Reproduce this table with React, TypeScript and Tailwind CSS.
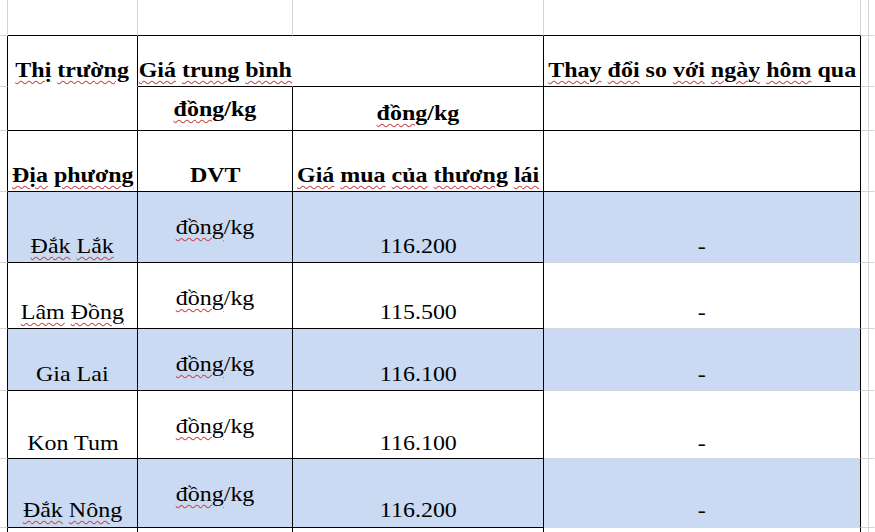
import React from 'react';

// border colours: black table lines, grey sheet gridlines, none
const rK = 'border-r-black';
const rG = 'border-r-[#d4d4d4]';
const rN = 'border-r-transparent';
const bK = 'border-b-black';
const bG = 'border-b-[#d4d4d4]';
const bL = 'border-b-[#d3d8e0]';
const bN = 'border-b-transparent';

const BLUE = 'bg-[#c9daf2]';

const rows = [
  { place: '[Đắk] [Lắk]', price: '116.200', blue: true, pb: 'pb-[5px]' },
  { place: '[Lâm] [Đồng]', price: '115.500', blue: false, pb: 'pb-[5px]' },
  { place: 'Gia Lai', price: '116.100', blue: true, pb: 'pb-[5px]' },
  { place: 'Kon Tum', price: '116.100', blue: false, pb: 'pb-[4px]' },
  { place: '[Đắk] [Nông]', price: '116.200', blue: true, pb: 'pb-[6px]' },
];

// words in [brackets] get the red spell-check squiggle
function Txt({ text, bold }: { text: string; bold?: boolean }) {
  const parts = text.split(/(\[[^\]]+\])/).filter(Boolean);
  return (
    <span
      className={`block origin-center scale-x-[1.09] whitespace-nowrap [font-family:Liberation_Serif,Times_New_Roman,serif] text-[22px] leading-[22px] text-black ${bold ? 'font-bold' : 'font-normal'}`}
    >
      {parts.map((p, i) =>
        p.startsWith('[') ? (
          <span key={i} className="underline decoration-wavy decoration-[#c94a4a] decoration-1 underline-offset-[3px]">
            {p.slice(1, -1)}
          </span>
        ) : (
          <React.Fragment key={i}>{p}</React.Fragment>
        )
      )}
    </span>
  );
}

function Cell({
  r,
  b,
  bg = 'bg-white',
  pos = 'items-end pb-[5px]',
  children,
}: {
  r: string;
  b: string;
  bg?: string;
  pos?: string;
  children?: React.ReactNode;
}) {
  return <div className={`flex justify-center overflow-visible border-r border-b ${r} ${b} ${bg} ${pos}`}>{children}</div>;
}

export default function App() {
  return (
    <div className="grid h-[532px] w-[875px] grid-cols-[8px_130px_155px_251px_317px_8px_1fr] grid-rows-[3px_33px_51px_44px_61px_71px_66px_62px_68px_69px_40px] overflow-hidden bg-white [font-family:Liberation_Serif,serif]">
      {/* sheet rows above the table */}
      <Cell r={rG} b={bG} />
      <Cell r={rG} b={bG} />
      <Cell r={rG} b={bG} />
      <Cell r={rG} b={bG} />
      <Cell r={rG} b={bG} />
      <Cell r={rG} b={bG} />
      <Cell r={rN} b={bG} />

      <Cell r={rG} b={bG} />
      <Cell r={rG} b={bK} />
      <Cell r={rG} b={bK} />
      <Cell r={rG} b={bK} />
      <Cell r={rG} b={bK} />
      <Cell r={rG} b={bG} />
      <Cell r={rN} b={bG} />

      {/* header row 1 */}
      <Cell r={rK} b={bG} />
      <Cell r={rK} b={bN}>
        <Txt bold text="[Thị] [trường]" />
      </Cell>
      <Cell r={rN} b={bK}>
        <Txt bold text="[Giá] [trung] [bình]" />
      </Cell>
      <Cell r={rK} b={bK} />
      <Cell r={rK} b={bK}>
        <Txt bold text="[Thay] [đổi] so [với] [ngày] [hôm] qua" />
      </Cell>
      <Cell r={rG} b={bG} />
      <Cell r={rN} b={bG} />

      {/* header row 2 */}
      <Cell r={rK} b={bG} />
      <Cell r={rK} b={bK} />
      <Cell r={rK} b={bK} pos="items-end pb-[10px]">
        <Txt bold text="[đồng]/kg" />
      </Cell>
      <Cell r={rK} b={bK} pos="items-end pb-[6px]">
        <Txt bold text="[đồng]/kg" />
      </Cell>
      <Cell r={rK} b={bK} />
      <Cell r={rG} b={bG} />
      <Cell r={rN} b={bG} />

      {/* header row 3 */}
      <Cell r={rK} b={bG} />
      <Cell r={rK} b={bK}>
        <Txt bold text="[Địa] [phương]" />
      </Cell>
      <Cell r={rK} b={bK}>
        <Txt bold text="DVT" />
      </Cell>
      <Cell r={rK} b={bK}>
        <Txt bold text="[Giá] [mua] [của] [thương] [lái]" />
      </Cell>
      <Cell r={rK} b={bK} />
      <Cell r={rG} b={bG} />
      <Cell r={rN} b={bG} />

      {rows.map((row) => {
        const bg = row.blue ? BLUE : 'bg-white';
        return (
          <React.Fragment key={row.place}>
            <Cell r={rK} b={bG} />
            <Cell r={rK} b={bK} bg={bg} pos={`items-end ${row.pb}`}>
              <Txt text={row.place} />
            </Cell>
            <Cell r={rK} b={bK} bg={bg} pos="items-start pt-[24px]">
              <Txt text="[đồng]/kg" />
            </Cell>
            <Cell r={rK} b={bK} bg={bg} pos={`items-end ${row.pb}`}>
              <Txt text={row.price} />
            </Cell>
            <Cell r={rK} b={bL} bg={bg} pos={`items-end ${row.pb}`}>
              <Txt text="-" />
            </Cell>
            <Cell r={rG} b={bG} />
            <Cell r={rN} b={bG} />
          </React.Fragment>
        );
      })}

      {/* next (empty) row, cut off by the window */}
      <Cell r={rK} b={bG} />
      <Cell r={rK} b={bK} />
      <Cell r={rK} b={bK} />
      <Cell r={rK} b={bK} />
      <Cell r={rK} b={bL} />
      <Cell r={rG} b={bG} />
      <Cell r={rN} b={bG} />
    </div>
  );
}
